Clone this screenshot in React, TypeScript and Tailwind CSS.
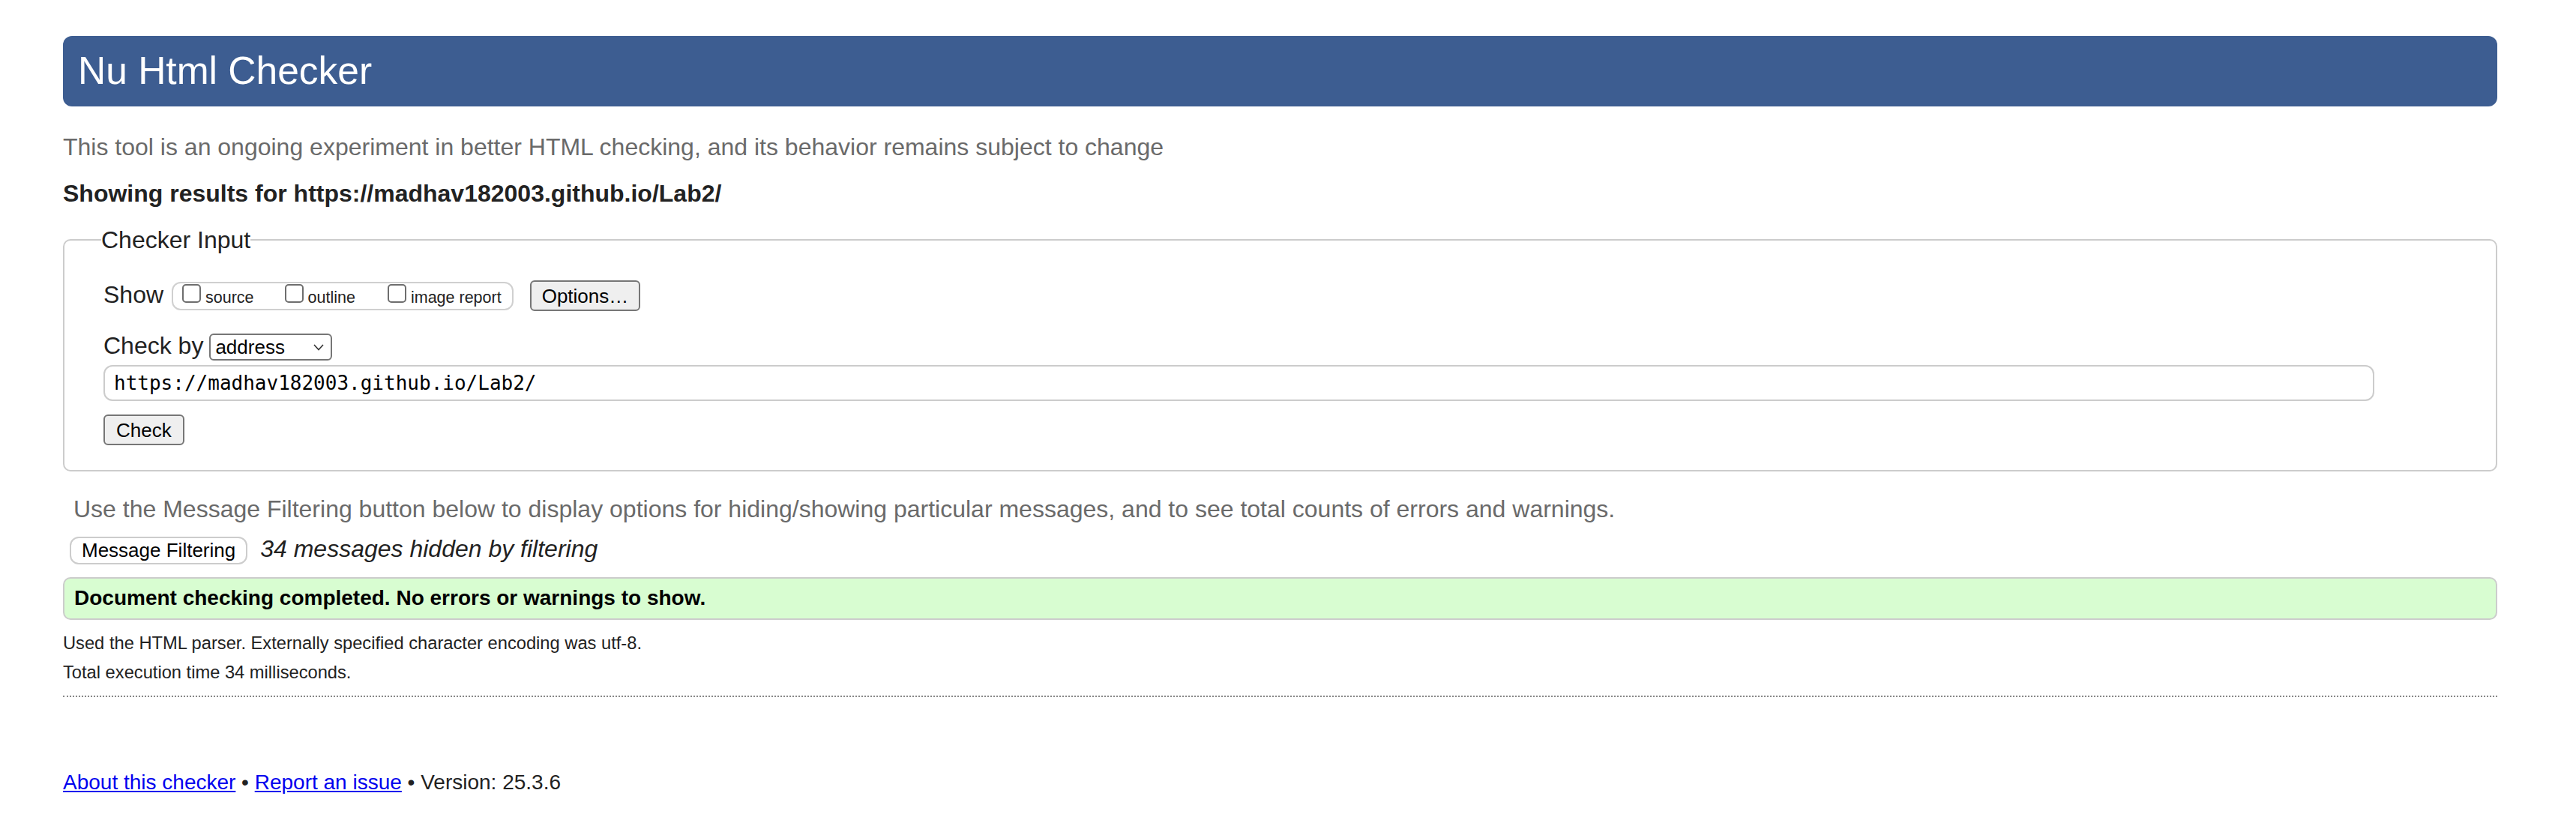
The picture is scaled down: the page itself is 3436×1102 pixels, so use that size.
function CheckOpt({ label, className = '' }: { label: string; className?: string }) {
  return (
    <label className={`flex items-baseline ${className}`}>
      <span className="inline-block w-[25px] h-[25px] border-2 border-[#6e6e6e] rounded-[5px] bg-white" />
      <span className="ml-[6px] leading-[25px]">{label}</span>
    </label>
  );
}

export default function App() {
  return (
    <div className="min-h-screen bg-white pl-[84px] pr-[105px] pt-[48px] text-[32px] text-[#222] font-['Liberation_Sans',Arial,sans-serif]">
      <header className="h-[94px] rounded-[12px] bg-[#3d5d91] flex items-center pl-[20px]">
        <h1 className="text-[51.5px] leading-none font-normal text-white">Nu Html Checker</h1>
      </header>

      <p className="mt-[36px] leading-[36px] text-[#6a6a6a]">
        This tool is an ongoing experiment in better HTML checking, and its behavior remains subject to change
      </p>
      <p className="mt-[26px] leading-[36px] font-bold">
        Showing results for https://madhav182003.github.io/Lab2/
      </p>

      <fieldset className="mt-[26px] border-2 border-[#ccc] rounded-[10px] pl-[52px] pr-[52px] pt-[36px] pb-[33px]">
        <legend className="-ml-[3px] leading-[36px]">Checker Input</legend>

        <div className="flex items-baseline">
          <span className="leading-[36px]">Show</span>
          <div className="ml-[11px] h-[38px] border-2 border-[#d0d0d0] rounded-[12px] pl-[12px] pr-[14px] pt-[1px] flex items-baseline text-[21.5px]">
            <CheckOpt label="source" className="mr-[41px]" />
            <CheckOpt label="outline" className="mr-[43px]" />
            <CheckOpt label="image report" />
          </div>
          <button className="ml-[22px] h-[41px] px-[14px] border-2 border-[#767676] rounded-[6px] bg-[#efefef] text-[26px] leading-[30px] text-black">
            Options…
          </button>
        </div>

        <div className="mt-[28px] flex items-baseline">
          <span className="leading-[36px]">Check by</span>
          <div className="ml-[8px] w-[164px] h-[36px] border-2 border-[#767676] rounded-[6px] pl-[6px] pr-[9px] flex items-center justify-between text-[26px] leading-[30px] text-black">
            <span>address</span>
            <svg width="14" height="9" viewBox="0 0 14 9" fill="none">
              <polyline points="1,1 7,7.5 13,1" stroke="#333" strokeWidth="1.6" />
            </svg>
          </div>
        </div>

        <div className="mt-[6px] w-[3029px] h-[48px] border-2 border-[#ccc] rounded-[12px] pl-[12px] flex items-center text-[26px] text-black font-['DejaVu_Sans_Mono',monospace]">
          https://madhav182003.github.io/Lab2/
        </div>

        <button className="mt-[18px] block h-[41px] px-[15px] border-2 border-[#767676] rounded-[6px] bg-[#efefef] text-[26px] leading-[30px] text-black">
          Check
        </button>
      </fieldset>

      <p className="mt-[32px] ml-[14px] leading-[36px] text-[#6a6a6a]">
        Use the Message Filtering button below to display options for hiding/showing particular messages, and to see total counts of errors and warnings.
      </p>

      <div className="mt-[17px] ml-[9px] flex items-baseline">
        <button className="h-[37px] px-[14px] border-2 border-[#ccc] rounded-[12px] bg-white text-[26px] leading-[30px] text-black">
          Message Filtering
        </button>
        <span className="ml-[17px] leading-[36px] italic">34 messages hidden by filtering</span>
      </div>

      <div className="mt-[17px] h-[57px] border-2 border-[#ccc] rounded-[10px] bg-[#d8fdd1] flex items-center pl-[13px] text-[28px] font-bold leading-[32px] text-black">
        Document checking completed. No errors or warnings to show.
      </div>

      <div className="mt-[12px] text-[23.7px] leading-[39px]">
        <p>Used the HTML parser. Externally specified character encoding was utf-8.</p>
        <p>Total execution time 34 milliseconds.</p>
      </div>

      <div className="mt-[11px] border-t-2 border-dotted border-[#888]" />

      <p className="mt-[98px] text-[28px] leading-[32px]">
        <a href="#" className="text-[#0000ee] underline">About this checker</a>
        {' • '}
        <a href="#" className="text-[#0000ee] underline">Report an issue</a>
        {' • Version: 25.3.6'}
      </p>
    </div>
  );
}
